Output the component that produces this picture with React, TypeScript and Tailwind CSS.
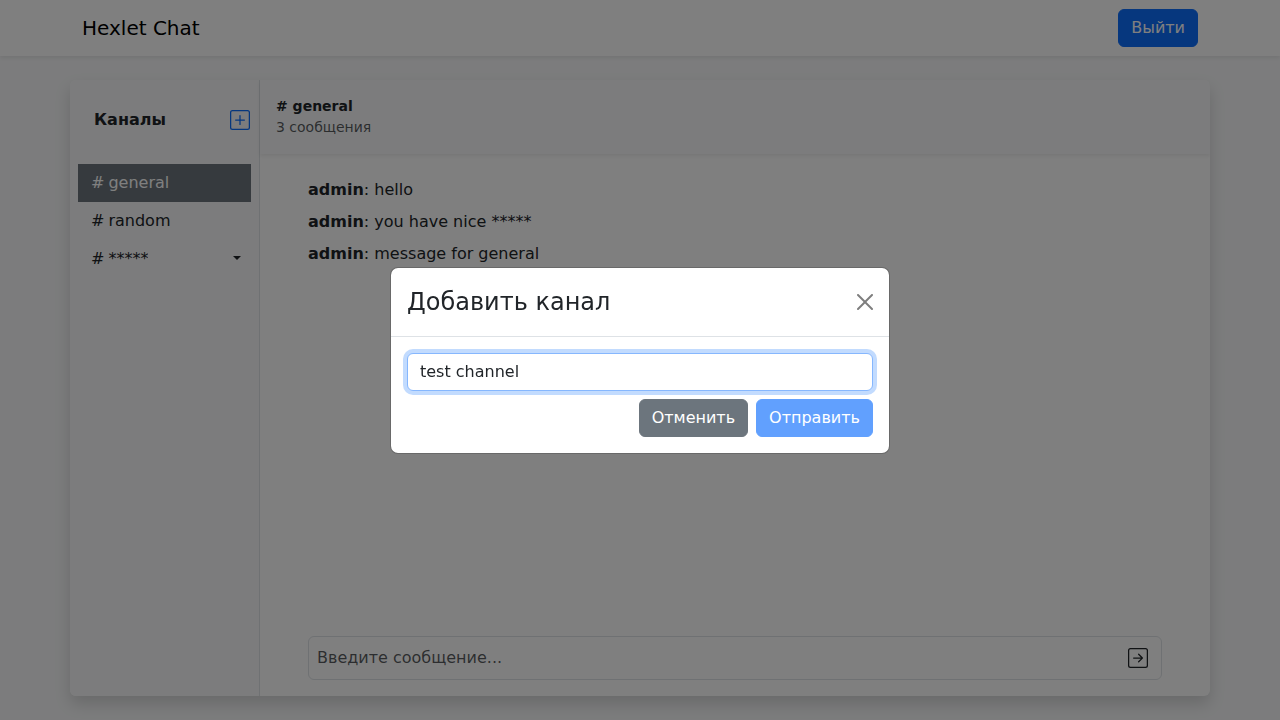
import { useState } from 'react';
import { BsArrowRightSquare, BsPlusSquare } from 'react-icons/bs';

const channels = [
  { id: 1, name: 'general', removable: false },
  { id: 2, name: 'random', removable: false },
  { id: 3, name: '*****', removable: true },
];

const messages = [
  { id: 1, author: 'admin', body: 'hello' },
  { id: 2, author: 'admin', body: 'you have nice *****' },
  { id: 3, author: 'admin', body: 'message for general' },
];

function Navbar() {
  return (
    <nav className="relative bg-white shadow-[0_2px_4px_rgba(0,0,0,0.075)]">
      <div className="mx-auto flex h-14 max-w-[1140px] items-center justify-between px-3">
        <a href="/" className="text-xl text-black">
          Hexlet Chat
        </a>
        <button type="button" className="rounded-md border border-[#0d6efd] bg-[#0d6efd] px-3 py-1.5 leading-6 text-white">
          Выйти
        </button>
      </div>
    </nav>
  );
}

function Sidebar({ current, onSelect }: { current: number; onSelect: (id: number) => void }) {
  return (
    <aside className="w-1/6 shrink-0 border-r border-[#dee2e6] bg-[#f8f9fa]">
      <div className="mt-1 mb-2 flex h-18 items-center justify-between pr-2 pl-6">
        <b>Каналы</b>
        <button type="button" aria-label="Добавить канал" className="border border-transparent text-[#0d6efd]">
          <BsPlusSquare size={20} />
        </button>
      </div>
      <ul className="px-2">
        {channels.map((channel) => (
          <li key={channel.id} className="flex">
            <button
              type="button"
              onClick={() => onSelect(channel.id)}
              className={
                channel.id === current
                  ? 'flex min-w-0 grow gap-1 border border-[#6c757d] bg-[#6c757d] px-3 py-1.5 text-left leading-6 text-white'
                  : 'flex min-w-0 grow gap-1 border border-transparent px-3 py-1.5 text-left leading-6'
              }
            >
              <span>#</span>
              <span className="truncate">{channel.name}</span>
            </button>
            {channel.removable && (
              <button type="button" aria-label="Управление каналом" className="flex items-center px-2.5 pb-0.5">
                <span className="border-x-4 border-t-4 border-x-transparent border-t-[#212529]" />
              </button>
            )}
          </li>
        ))}
      </ul>
    </aside>
  );
}

function Chat({ name }: { name: string }) {
  return (
    <section className="flex min-w-0 grow flex-col">
      <div className="mb-6 bg-[#f8f9fa] p-4 text-sm leading-[21px] shadow-[0_2px_4px_rgba(0,0,0,0.075)]">
        <p className="font-bold"># {name}</p>
        <p className="text-[#212529]/75">3 сообщения</p>
      </div>
      <div className="grow overflow-auto px-12">
        {messages.map((message) => (
          <p key={message.id} className="mb-2 break-words">
            <b>{message.author}</b>: {message.body}
          </p>
        ))}
      </div>
      <div className="px-12 py-4">
        <form className="flex items-center rounded-md border border-[#dee2e6] py-1" onSubmit={(e) => e.preventDefault()}>
          <input
            aria-label="Новое сообщение"
            placeholder="Введите сообщение..."
            className="min-w-0 grow bg-transparent py-1 pl-2 leading-6 outline-none placeholder:text-[#212529]/75"
          />
          <button type="submit" aria-label="Отправить сообщение" className="px-[13px] py-[7px]">
            <BsArrowRightSquare size={20} />
          </button>
        </form>
      </div>
    </section>
  );
}

function AddChannelModal() {
  const [value, setValue] = useState('test channel');
  return (
    <div className="fixed inset-0 flex items-center justify-center bg-black/50">
      <div
        role="dialog"
        aria-modal="true"
        aria-labelledby="modal-title"
        className="w-full max-w-[500px] rounded-lg border border-black/[0.175] bg-white bg-clip-padding"
      >
        <div className="flex items-center justify-between border-b border-[#dee2e6] p-4">
          <h4 id="modal-title" className="text-2xl leading-9 font-medium">
            Добавить канал
          </h4>
          <button type="button" aria-label="Закрыть" className="opacity-50">
            <svg viewBox="0 0 16 16" className="size-4 fill-black">
              <path d="M.293.293a1 1 0 0 1 1.414 0L8 6.586 14.293.293a1 1 0 1 1 1.414 1.414L9.414 8l6.293 6.293a1 1 0 0 1-1.414 1.414L8 9.414l-6.293 6.293a1 1 0 0 1-1.414-1.414L6.586 8 .293 1.707a1 1 0 0 1 0-1.414z" />
            </svg>
          </button>
        </div>
        <form className="p-4" onSubmit={(e) => e.preventDefault()}>
          <input
            aria-label="Имя канала"
            value={value}
            onChange={(e) => setValue(e.target.value)}
            className="mb-2 block w-full rounded-md border border-[#86b7fe] bg-white px-3 py-1.5 leading-6 shadow-[0_0_0_4px_rgba(13,110,253,0.25)] outline-none"
          />
          <div className="flex justify-end gap-2">
            <button type="button" className="rounded-md border border-[#6c757d] bg-[#6c757d] px-3 py-1.5 leading-6 text-white">
              Отменить
            </button>
            <button type="submit" disabled className="rounded-md border border-[#0d6efd] bg-[#0d6efd] px-3 py-1.5 leading-6 text-white disabled:opacity-65">
              Отправить
            </button>
          </div>
        </form>
      </div>
    </div>
  );
}

export default function App() {
  const [current, setCurrent] = useState(1);
  const name = channels.find((channel) => channel.id === current)?.name ?? '';
  return (
    <div className="flex h-screen flex-col bg-[#f8f9fa] font-['DejaVu_Sans',sans-serif] text-base text-[#212529]">
      <Navbar />
      <main className="mx-auto my-6 flex min-h-0 w-full max-w-[1140px] grow overflow-hidden rounded-md bg-white shadow-[0_8px_16px_rgba(0,0,0,0.15)]">
        <Sidebar current={current} onSelect={setCurrent} />
        <Chat name={name} />
      </main>
      <AddChannelModal />
    </div>
  );
}
